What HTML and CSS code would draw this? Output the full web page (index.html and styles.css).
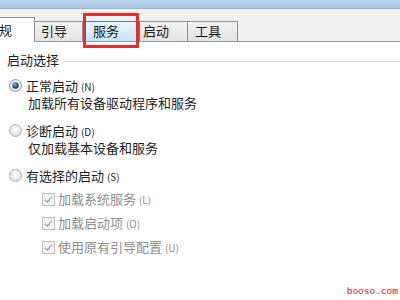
FILE: index.html
```html
<!DOCTYPE html>
<html lang="zh">
<head>
<meta charset="utf-8">
<link rel="stylesheet" href="styles.css">
</head>
<body>
<div class="window">
  <div class="titlebar"></div>
  <div class="tabstrip">
    <div class="tab tab-selected">常规</div>
    <div class="tab tab-w48">引导</div>
    <div class="tab tab-hover">服务</div>
    <div class="tab tab-w48 tab-pad3">启动</div>
    <div class="tab tab-w50">工具</div>
  </div>
  <div class="redbox"></div>
  <div class="content">
    <div class="group-head">
      <span class="legend">启动选择</span>
      <span class="group-line"></span>
    </div>
    <div class="option first">
      <div class="radio-row">
        <svg class="radio" width="13" height="13" viewBox="0 0 13 13">
          <defs>
            <radialGradient id="rb" cx="50%" cy="40%" r="60%">
              <stop offset="0" stop-color="#ffffff"/>
              <stop offset="1" stop-color="#dcdcdc"/>
            </radialGradient>
            <radialGradient id="dot" cx="40%" cy="35%" r="65%">
              <stop offset="0" stop-color="#7fc4e8"/>
              <stop offset="0.5" stop-color="#2a6e98"/>
              <stop offset="1" stop-color="#0e3550"/>
            </radialGradient>
          </defs>
          <circle cx="6.5" cy="6.5" r="6" fill="url(#rb)" stroke="#8f9aa3" stroke-width="1"/>
          <circle cx="6.5" cy="6.5" r="3.2" fill="url(#dot)"/>
        </svg>
        <span class="label">正常启动 <small>(N)</small></span>
      </div>
      <div class="desc">加载所有设备驱动程序和服务</div>
    </div>
    <div class="option">
      <div class="radio-row">
        <svg class="radio" width="13" height="13" viewBox="0 0 13 13">
          <circle cx="6.5" cy="6.5" r="6" fill="url(#rb)" stroke="#a9afb4" stroke-width="1"/>
        </svg>
        <span class="label">诊断启动 <small>(D)</small></span>
      </div>
      <div class="desc">仅加载基本设备和服务</div>
    </div>
    <div class="option">
      <div class="radio-row">
        <svg class="radio" width="13" height="13" viewBox="0 0 13 13">
          <circle cx="6.5" cy="6.5" r="6" fill="url(#rb)" stroke="#a9afb4" stroke-width="1"/>
        </svg>
        <span class="label">有选择的启动 <small>(S)</small></span>
      </div>
    </div>
    <div class="checks">
      <div class="check-row">
        <svg class="check" width="13" height="13" viewBox="0 0 13 13">
          <rect x="0.5" y="0.5" width="12" height="12" fill="#f4f4f4" stroke="#b8b8b8"/>
          <path d="M3 6.8 L5.4 9.2 L10 3.6" fill="none" stroke="#a6a6a6" stroke-width="1.4"/>
        </svg>
        <span class="check-label">加载系统服务 <small>(L)</small></span>
      </div>
      <div class="check-row">
        <svg class="check" width="13" height="13" viewBox="0 0 13 13">
          <rect x="0.5" y="0.5" width="12" height="12" fill="#f4f4f4" stroke="#b8b8b8"/>
          <path d="M3 6.8 L5.4 9.2 L10 3.6" fill="none" stroke="#a6a6a6" stroke-width="1.4"/>
        </svg>
        <span class="check-label">加载启动项 <small>(O)</small></span>
      </div>
      <div class="check-row">
        <svg class="check" width="13" height="13" viewBox="0 0 13 13">
          <rect x="0.5" y="0.5" width="12" height="12" fill="#f4f4f4" stroke="#b8b8b8"/>
          <path d="M3 6.8 L5.4 9.2 L10 3.6" fill="none" stroke="#a6a6a6" stroke-width="1.4"/>
        </svg>
        <span class="check-label">使用原有引导配置 <small>(U)</small></span>
      </div>
    </div>
  </div>
  <div class="watermark">booso.com</div>
</div>
</body>
</html>
```

FILE: styles.css
```css
html, body {
  margin: 0;
  padding: 0;
}
body {
  width: 400px;
  height: 300px;
  overflow: hidden;
  background: #ffffff;
  font-family: "Noto Sans CJK SC", "Noto Sans", sans-serif;
  color: #1e1e1e;
}
.window {
  position: relative;
  width: 400px;
  height: 300px;
  overflow: hidden;
  background: #ffffff;
}
.titlebar {
  height: 8px;
  background: linear-gradient(#bcd5ee, #a6c4e4);
  border-bottom: 1px solid #9fb2c6;
}
.tabstrip {
  height: 33px;
  background: #f0f0f0;
  display: flex;
  align-items: flex-end;
  border-bottom: 1px solid #8e9aa6;
  box-sizing: border-box;
}
.tab {
  box-sizing: border-box;
  height: 20px;
  font-size: 13px;
  line-height: 18px;
  padding-left: 6px;
  border: 1px solid #8d8f91;
  border-bottom: none;
  border-left: none;
  background: linear-gradient(#f2f2f2, #e3e3e3);
  color: #1a1a1a;
  margin-bottom: 0;
}
.tab-selected {
  width: 50px;
  margin-left: -15px;
  padding-left: 1px;
  height: 24px;
  line-height: 24px;
  background: #ffffff;
  margin-bottom: -1px;
  height: 25px;
}
.tab-w48 {
  width: 48px;
}
.tab-w50 {
  width: 50px;
  padding-left: 7px;
}
.tab-pad3 {
  padding-left: 3px;
}
.tab-hover {
  width: 57px;
  padding-left: 10px;
  background: linear-gradient(#eaf6fd, #c4e6f9);
  border-color: #3c7fb1;
}
.redbox {
  position: absolute;
  left: 83px;
  top: 13px;
  width: 56px;
  height: 35px;
  box-sizing: border-box;
  border: 3px solid #e1302f;
}
.content {
  display: flex;
  flex-direction: column;
  padding-top: 10px;
}
.group-head {
  display: flex;
  align-items: center;
  height: 16px;
  padding-left: 7px;
}
.legend {
  font-size: 13px;
  line-height: 16px;
}
.group-line {
  flex: 1;
  height: 1px;
  margin-left: 4px;
  margin-top: 2px;
  background: #d5dfe5;
}
.option {
  display: flex;
  flex-direction: column;
  margin-top: 11px;
}
.option.first {
  margin-top: 9px;
}
.radio-row {
  display: flex;
  align-items: center;
  height: 17px;
  padding-left: 9px;
}
.radio {
  flex: none;
}
.label {
  font-size: 13px;
  line-height: 17px;
  margin-left: 4px;
}
small {
  font-size: 10px;
}
.desc {
  font-size: 13px;
  line-height: 17px;
  padding-left: 28px;
}
.checks {
  display: flex;
  flex-direction: column;
  margin-top: 3px;
  padding-left: 42px;
}
.check-row {
  display: flex;
  align-items: center;
  height: 24px;
}
.check {
  flex: none;
}
.check-label {
  font-size: 13px;
  line-height: 17px;
  margin-left: 3px;
  color: #8e8e8e;
}
.watermark {
  position: absolute;
  right: 2px;
  bottom: 3px;
  font-family: "Liberation Mono", monospace;
  font-size: 9.5px;
  color: #c8101a;
}
```
